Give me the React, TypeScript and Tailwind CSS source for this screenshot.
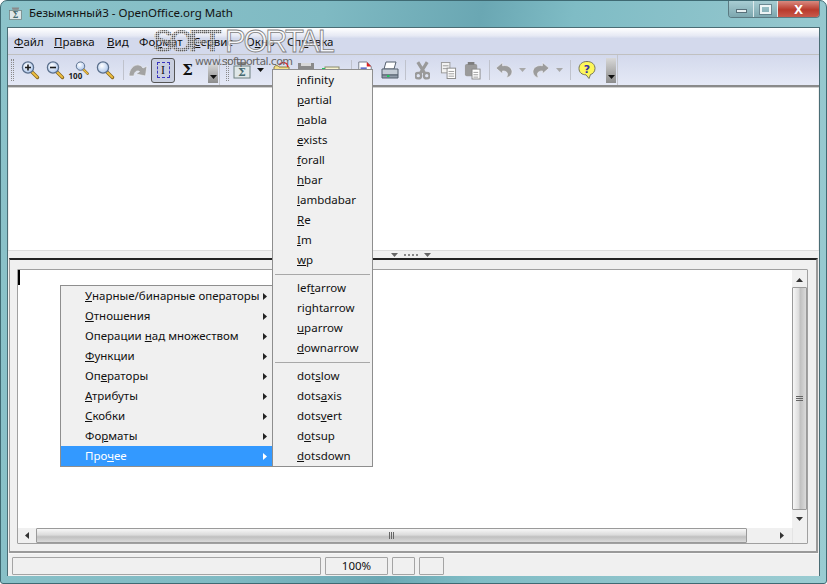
import React from "react";

// OpenOffice.org Math window on Vista, with the Прочее context submenu open

const U = ({ children }: { children: React.ReactNode }) => <u>{children}</u>;

function Lens({ mark }: { mark?: "plus" | "minus" }) {
  return (
    <svg width="20" height="20" viewBox="0 0 20 20">
      <defs>
        <radialGradient id="lensFill" cx="0.4" cy="0.35" r="0.7">
          <stop offset="0" stopColor="#ffffff" />
          <stop offset="1" stopColor="#a9c4ec" />
        </radialGradient>
      </defs>
      <path d="M11.5 11.5 L17.5 17.5" stroke="#8a6a20" strokeWidth="3.4" strokeLinecap="round" />
      <path d="M12 12 L17.2 17.2" stroke="#f0c040" strokeWidth="1.8" strokeLinecap="round" />
      <circle cx="8" cy="7.5" r="5.6" fill="url(#lensFill)" stroke="#5a6f8c" strokeWidth="1.3" />
      {mark === "plus" && <path d="M5 7.5H11M8 4.5V10.5" stroke="#1c1c1c" strokeWidth="1.6" />}
      {mark === "minus" && <path d="M5 7.5H11" stroke="#1c1c1c" strokeWidth="1.6" />}
    </svg>
  );
}

function Zoom100() {
  return (
    <div className="relative w-5 h-5">
      <div className="absolute left-[2px] top-[-2px] scale-75">
        <Lens />
      </div>
      <span className="absolute left-[-1px] top-[11px] text-[8px] leading-[9px] font-bold text-[#222]">100</span>
    </div>
  );
}

// chunky grey arc with the head on the right, first button of the toolbar
function ArchArrow() {
  return (
    <svg width="20" height="18" viewBox="0 0 20 18">
      <path d="M1 15 C1 8 6 3 11 4 C13 4.5 14 5.5 15 7 L19 5 L17.5 15 L8 13 L11.5 10.5 C9 9 6 11 6 15 Z" fill="#a3a3a3" stroke="#eef0f8" strokeWidth="0.7" />
    </svg>
  );
}

function UndoArrow({ flip }: { flip?: boolean }) {
  return (
    <svg width="18" height="18" viewBox="0 0 19 18" className={flip ? "-scale-x-100" : ""}>
      <path d="M1 7 L8 1 V4.5 C13 3.5 18 6 18 11 C18 14 15 17 12 17 C14 14 14 10 8 10 V13 Z" fill="#9c9c9c" stroke="#eef0f8" strokeWidth="0.7" />
    </svg>
  );
}

function DocSigma() {
  return (
    <svg width="20" height="20" viewBox="0 0 20 20">
      <path d="M5 2 L15 2 L14 5 L6 5 Z" fill="#8a8a8a" />
      <rect x="2" y="6" width="16" height="12" fill="#dfe7e8" stroke="#6f8080" />
      <text x="10" y="16" textAnchor="middle" fontSize="11" fontWeight="700" fontFamily="'DejaVu Serif', serif" fill="#456a70">Σ</text>
    </svg>
  );
}

function Printer() {
  return (
    <svg width="20" height="20" viewBox="0 0 20 20">
      <path d="M6 2 H16 L14 9 H4 Z" fill="#fff" stroke="#55606f" />
      <path d="M2 9 H18 V15 H2 Z" fill="#c4ccd6" stroke="#55606f" />
      <path d="M2 15 H18 V18 H2 Z" fill="#8f9aa8" stroke="#55606f" />
      <rect x="7" y="15" width="2.5" height="2" fill="#22c55e" />
    </svg>
  );
}

function PdfDoc() {
  return (
    <svg width="16" height="20" viewBox="0 0 18 20">
      <path d="M2 1 H11 L16 6 V18 H2 Z" fill="#fff" stroke="#6b7280" />
      <path d="M11 1 L16 6 H11 Z" fill="#d22" />
      <path d="M4 8H11M4 11H13" stroke="#3344bb" strokeWidth="1.4" />
      <path d="M4 14H13" stroke="#8a8a8a" strokeWidth="1.4" />
    </svg>
  );
}

function Cut() {
  return (
    <svg width="15" height="19" viewBox="0 0 16 20">
      <path d="M3 1 L11 14 M13 1 L5 14" stroke="#9a9a9a" strokeWidth="3.4" />
      <circle cx="3.5" cy="15.5" r="3" fill="none" stroke="#9a9a9a" strokeWidth="2.4" />
      <circle cx="12.5" cy="15.5" r="3" fill="none" stroke="#9a9a9a" strokeWidth="2.4" />
    </svg>
  );
}

function Copy() {
  return (
    <svg width="17" height="19" viewBox="0 0 18 20">
      <rect x="1.5" y="1.5" width="9" height="11" fill="#f2f2f2" stroke="#9a9a9a" />
      <path d="M3 5H9M3 8H9" stroke="#9a9a9a" />
      <rect x="7.5" y="7.5" width="9" height="11" fill="#fff" stroke="#8a8a8a" />
      <path d="M9 11H15M9 13.5H15M9 16H15" stroke="#9a9a9a" />
    </svg>
  );
}

function Paste() {
  return (
    <svg width="17" height="19" viewBox="0 0 18 20">
      <rect x="1" y="3" width="13" height="13" rx="2" fill="#9a9a9a" />
      <rect x="4" y="1" width="7" height="3" fill="#7d7d7d" />
      <rect x="8.5" y="8.5" width="8.5" height="10.5" fill="#fff" stroke="#8a8a8a" />
      <path d="M10 12H15M10 14.5H15M10 17H15" stroke="#9a9a9a" />
    </svg>
  );
}

function Help() {
  return (
    <svg width="18" height="20" viewBox="0 0 18 20">
      <path d="M9 1.5 C14 1.5 17 4.5 17 8.5 C17 12 14.5 14 12.5 14.5 L11 18.5 L8 14.8 C4 14.8 1 12.5 1 8.5 C1 4.5 4 1.5 9 1.5 Z" fill="#fdf75a" stroke="#77775a" />
      <text x="9" y="12.5" textAnchor="middle" fontSize="11" fontWeight="700" fontFamily="'DejaVu Sans', sans-serif" fill="#3730a3">?</text>
    </svg>
  );
}

// the three icons whose tops stick out above the submenu
function HiddenIcons() {
  return (
    <svg width="84" height="20" viewBox="0 0 84 20" className="shrink-0">
      <path d="M8 8 C8 5 12 5 13 7 H23 V12 H8 Z" fill="#f4e08a" stroke="#8a7a3a" />
      <path d="M13 5 C15 2 19 2 21 4 L22 7" fill="none" stroke="#d22" strokeWidth="1.4" />
      <rect x="32" y="3" width="16" height="15" fill="#8a8a8a" />
      <rect x="35" y="3" width="10" height="3" fill="#d8d8d8" />
      <rect x="59" y="7" width="14" height="10" fill="#f7f3d0" stroke="#8a8a6a" />
      <rect x="56" y="8" width="3" height="2" fill="#22c55e" />
    </svg>
  );
}

const Slot = ({ w, children }: { w: string; children?: React.ReactNode }) => (
  <div className={`${w} h-full flex items-center justify-center shrink-0`}>{children}</div>
);

const Sep = ({ ml }: { ml: string }) => <div className={`${ml} w-px h-[20px] bg-[#bfc2cc] shrink-0`} />;

const Grip = ({ ml }: { ml: string }) => (
  <div className={`${ml} w-[3px] h-[22px] shrink-0 border-x border-dotted border-[#8a8a8a]`} />
);

const Drop = ({ color = "#a8a8a8" }: { color?: string }) => (
  <svg width="7" height="4" viewBox="0 0 7 4">
    <path d="M0 0H7L3.5 4Z" fill={color} />
  </svg>
);

function Overflow({ cls }: { cls: string }) {
  return (
    <div className={`${cls} w-[10px] shrink-0 flex items-end justify-center pb-[4px] bg-gradient-to-b from-[#d8d8d8] to-[#8c8c8c]`}>
      <Drop color="#111" />
    </div>
  );
}

function Toolbar() {
  return (
    <div className="h-[30px] flex items-center bg-gradient-to-b from-[#d3d9ec] to-[#e5e9f6]">
      <Grip ml="ml-[3px]" />
      <div className="w-[3px] shrink-0" />
      <Slot w="w-[25px]"><Lens mark="plus" /></Slot>
      <Slot w="w-[25px]"><Lens mark="minus" /></Slot>
      <Slot w="w-[25px]"><Zoom100 /></Slot>
      <Slot w="w-[25px]"><Lens /></Slot>
      <Sep ml="ml-[6px]" />
      <Slot w="w-[27px]"><ArchArrow /></Slot>
      <div className="w-[24px] h-[25px] shrink-0 flex items-center justify-center rounded-[3px] border border-[#555] bg-[#c9cfdf]">
        <div className="w-[13px] h-[16px] flex items-center justify-center border border-dashed border-[#3a35c0] text-[12px] leading-none text-[#111] font-['Liberation_Serif',serif]">I</div>
      </div>
      <Slot w="w-[25px]"><span className="text-[15px] font-bold font-['DejaVu_Serif',serif] text-[#111]">Σ</span></Slot>
      <Overflow cls="ml-[8px] h-[19px] self-end mb-[2px]" />
      <div className="ml-[1px] w-px h-full bg-[#c4c6cc]" />
      <Grip ml="ml-[6px]" />
      <Slot w="w-[26px]"><DocSigma /></Slot>
      <Slot w="w-[11px]"><Drop color="#111" /></Slot>
      <HiddenIcons />
      <Sep ml="ml-[1px]" />
      <Slot w="w-[26px]"><PdfDoc /></Slot>
      <Slot w="w-[24px]"><Printer /></Slot>
      <Sep ml="ml-[3px]" />
      <Slot w="w-[32px]"><Cut /></Slot>
      <Slot w="w-[20px]"><Copy /></Slot>
      <Slot w="w-[28px]"><Paste /></Slot>
      <Sep ml="ml-[3px]" />
      <Slot w="w-[28px]"><UndoArrow /></Slot>
      <Slot w="w-[8px]"><Drop /></Slot>
      <Slot w="w-[29px]"><UndoArrow flip /></Slot>
      <Slot w="w-[8px]"><Drop /></Slot>
      <Sep ml="ml-[7px]" />
      <Slot w="w-[32px]"><Help /></Slot>
      <Overflow cls="ml-[3px] h-[25px]" />
      <div className="ml-px w-px h-full bg-[#c4c6cc]" />
    </div>
  );
}

function Watermark() {
  return (
    <svg className="absolute left-[150px] top-[26px] pointer-events-none" width="190" height="42" viewBox="0 0 190 42">
      <defs>
        <pattern id="dots" width="2" height="2" patternUnits="userSpaceOnUse">
          <rect width="2" height="2" fill="#ffffff" fillOpacity="0.5" />
          <rect width="1.4" height="1.4" fill="#5a5a5a" />
        </pattern>
      </defs>
      <text x="3" y="26" fontSize="31" fontWeight="700" fontFamily="'Liberation Sans', sans-serif" fill="url(#dots)" textLength="69">SOFT</text>
      <text x="75" y="26" fontSize="31" fontFamily="'Liberation Sans', sans-serif" fill="#ffffff" fillOpacity="0.75" stroke="#808080" strokeWidth="0.8" textLength="110">PORTAL</text>
      <text x="45" y="39" fontSize="11" fontFamily="'DejaVu Sans', sans-serif" fill="#666" textLength="98">www.softportal.com</text>
    </svg>
  );
}

const leftItems: React.ReactNode[] = [
  <><U>У</U>нарные/бинарные операторы</>,
  <><U>О</U>тношения</>,
  <>Операции <U>н</U>ад множеством</>,
  <><U>Ф</U>ункции</>,
  <>Оп<U>е</U>раторы</>,
  <><U>А</U>трибуты</>,
  <><U>С</U>кобки</>,
  <>Фо<U>р</U>маты</>,
];

const Tri = ({ color = "#222" }: { color?: string }) => (
  <svg width="4" height="7" viewBox="0 0 4 7" className="shrink-0">
    <path d="M0 0L4 3.5L0 7Z" fill={color} />
  </svg>
);

function LeftMenu() {
  return (
    <div className="absolute left-[60px] top-[285px] w-[213px] border border-[#8e8e8e] bg-[#f0f0f0]">
      {leftItems.map((it, i) => (
        <div key={i} className="h-[20px] pl-[24px] pr-[5px] flex items-center justify-between text-[#111] whitespace-nowrap">
          <span>{it}</span>
          <Tri />
        </div>
      ))}
      <div className="h-[20px] pl-[24px] pr-[5px] flex items-center justify-between text-white bg-[#3399ff]">
        <span>Про<U>ч</U>ее</span>
        <Tri color="#fff" />
      </div>
    </div>
  );
}

const RightRow = ({ children }: { children: React.ReactNode }) => (
  <div className="h-[20px] pl-[24px] flex items-center text-[#111]"><span>{children}</span></div>
);

const MenuSep = () => (
  <div className="h-[8px] flex items-center px-[2px]">
    <div className="w-full h-px bg-[#a8a8a8]" />
  </div>
);

function RightMenu() {
  return (
    <div className="absolute left-[272px] top-[69px] w-[101px] border border-[#8e8e8e] bg-[#f0f0f0]">
      <RightRow><U>i</U>nfinity</RightRow>
      <RightRow><U>p</U>artial</RightRow>
      <RightRow><U>n</U>abla</RightRow>
      <RightRow><U>e</U>xists</RightRow>
      <RightRow><U>f</U>orall</RightRow>
      <RightRow><U>h</U>bar</RightRow>
      <RightRow><U>l</U>ambdabar</RightRow>
      <RightRow><U>R</U>e</RightRow>
      <RightRow><U>I</U>m</RightRow>
      <RightRow><U>w</U>p</RightRow>
      <MenuSep />
      <RightRow>lef<U>t</U>arrow</RightRow>
      <RightRow>rightarrow</RightRow>
      <RightRow><U>u</U>parrow</RightRow>
      <RightRow><U>d</U>ownarrow</RightRow>
      <MenuSep />
      <RightRow>dot<U>s</U>low</RightRow>
      <RightRow>dots<U>a</U>xis</RightRow>
      <RightRow>dots<U>v</U>ert</RightRow>
      <RightRow>d<U>o</U>tsup</RightRow>
      <RightRow><U>d</U>otsdown</RightRow>
    </div>
  );
}

function StatusBox({ w, children }: { w: string; children?: React.ReactNode }) {
  return (
    <div className={`${w} h-[18px] shrink-0 flex items-center justify-center border border-[#a4a4a4] rounded-[1px] text-[#111]`}>
      {children}
    </div>
  );
}

export default function App() {
  return (
    <div className="relative w-[827px] h-[584px] overflow-hidden bg-white text-[11.5px] font-['Noto_Sans',sans-serif]">
      <div className="w-full h-full flex flex-col rounded-t-[7px] rounded-b-[3px] border border-[#3f6a73] bg-[linear-gradient(100deg,#8cc3ca_0%,#7fbac3_35%,#6aa7b3_52%,#7fbcc5_62%,#93c6cd_85%,#9accd2_100%)]">
        {/* title bar */}
        <div className="h-[26px] shrink-0 flex items-start">
          <div className="ml-[7px] mt-[5px] scale-75 origin-top-left w-[18px]"><DocSigma /></div>
          <span className="ml-[3px] mt-[4px] text-[11.5px] leading-[16px] text-[#111]">Безымянный3 - OpenOffice.org Math</span>
          <div className="ml-auto mr-[6px] h-[17px] flex border border-t-0 border-[#5b7a82] rounded-b-[4px] overflow-hidden">
            <div className="w-[25px] flex items-center justify-center border-r border-[#dfeaec] bg-[linear-gradient(#a8cdd3,#7da7af)]">
              <div className="w-[11px] h-[4px] mt-[4px] bg-white/80 border border-[#58707a]" />
            </div>
            <div className="w-[24px] flex items-center justify-center border-r border-[#dfeaec] bg-[linear-gradient(#a8cdd3,#7da7af)]">
              <div className="w-[11px] h-[9px] border-2 border-white/85 outline outline-[#58707a]/70" />
            </div>
            <div className="w-[41px] flex items-center justify-center bg-[linear-gradient(#d98a80,#b93a2c_55%,#c85a4c)]">
              <span className="text-[13px] leading-none font-bold text-white">X</span>
            </div>
          </div>
        </div>

        {/* window body */}
        <div className="mx-[6px] w-[813px] h-[549px] shrink-0 flex flex-col bg-[#f0f0f0] border-x border-t border-[#4a6d75]">
          {/* menu bar */}
          <div className="h-[27px] shrink-0 flex items-center pl-[6px] pt-[2px] text-[#111] border-b border-[#c0c0c0] bg-[linear-gradient(#ffffff,#e6e9f4_30%,#d3d9ec_40%)]">
            <span className="w-[40px]"><U>Ф</U>айл</span>
            <span className="w-[53px]"><U>П</U>равка</span>
            <span className="w-[32px]"><U>В</U>ид</span>
            <span className="w-[54px]">Фо<U>р</U>мат</span>
            <span className="w-[53px]"><U>С</U>ервис</span>
            <span className="w-[41px]">О<U>к</U>но</span>
            <span>Сп<U>р</U>авка</span>
          </div>
          <Toolbar />
          <div className="h-[3px] shrink-0 bg-[#8a8a8a] border-b border-[#d0d0d0]" />

          {/* command preview */}
          <div className="mx-px h-[162px] shrink-0 bg-white" />

          {/* splitter */}
          <div className="h-[8px] shrink-0 flex items-center justify-center gap-[6px] pr-[5px] border-t border-[#dcdcdc]">
            <Drop color="#666" />
            <div className="w-[14px] h-[2px] border-t-2 border-dotted border-[#888]" />
            <Drop color="#666" />
          </div>

          {/* editor panel */}
          <div className="ml-[1px] mr-[1px] h-[295px] shrink-0 border-t-2 border-t-[#222] border-l border-r-2 border-b-2 border-l-[#9a9a9a] border-r-[#9a9a9a] border-b-[#9a9a9a] pl-[7px] pr-[8px] pt-[9px]">
            <div className="relative h-[275px] flex flex-col border border-[#a0a0a0] rounded-[1px]">
              <div className="flex-1 flex min-h-0">
                <div className="flex-1 bg-white">
                  <div className="w-[2px] h-[15px] bg-black" />
                </div>
                {/* vertical scrollbar */}
                <div className="w-[15px] flex flex-col">
                  <div className="h-[17px] flex items-center justify-center pt-[2px]">
                    <svg width="7" height="4" viewBox="0 0 7 4"><path d="M0 4H7L3.5 0Z" fill="#333" /></svg>
                  </div>
                  <div className="flex-1 flex items-center justify-center rounded-[1px] border border-[#9a9a9a] bg-[linear-gradient(90deg,#f7f7f7,#dcdcdc_45%,#c0c0c0_55%,#dadada)]">
                    <div className="w-[7px] flex flex-col gap-px">
                      <div className="h-px bg-[#666]" />
                      <div className="h-px bg-[#666]" />
                      <div className="h-px bg-[#666]" />
                    </div>
                  </div>
                  <div className="h-[18px] flex items-center justify-center">
                    <Drop color="#333" />
                  </div>
                </div>
              </div>
              {/* horizontal scrollbar */}
              <div className="h-[15px] shrink-0 flex">
                <div className="w-[18px] shrink-0 flex items-center justify-center">
                  <svg width="4" height="7" viewBox="0 0 4 7"><path d="M4 0L0 3.5L4 7Z" fill="#333" /></svg>
                </div>
                <div className="w-[711px] shrink-0 flex items-center justify-center rounded-[1px] border border-[#9a9a9a] bg-[linear-gradient(#f7f7f7,#dcdcdc_45%,#c0c0c0_60%,#dadada)]">
                  <div className="h-[7px] flex gap-px">
                    <div className="w-px bg-[#666]" />
                    <div className="w-px bg-[#666]" />
                    <div className="w-px bg-[#666]" />
                  </div>
                </div>
                <div className="w-[45px] shrink-0 flex items-center justify-end pr-[8px]">
                  <Tri color="#333" />
                </div>
                <div className="w-[15px] shrink-0 border-l border-[#e4e4e4]" />
              </div>
            </div>
          </div>

          {/* status bar */}
          <div className="flex-1 flex items-center gap-[4px] pl-[4px] pt-[2px] border-t border-[#f8f8f8]">
            <StatusBox w="w-[309px]" />
            <StatusBox w="w-[63px]">100%</StatusBox>
            <StatusBox w="w-[23px]" />
            <StatusBox w="w-[25px]" />
          </div>
        </div>
      </div>

      <Watermark />
      <RightMenu />
      <LeftMenu />
    </div>
  );
}
